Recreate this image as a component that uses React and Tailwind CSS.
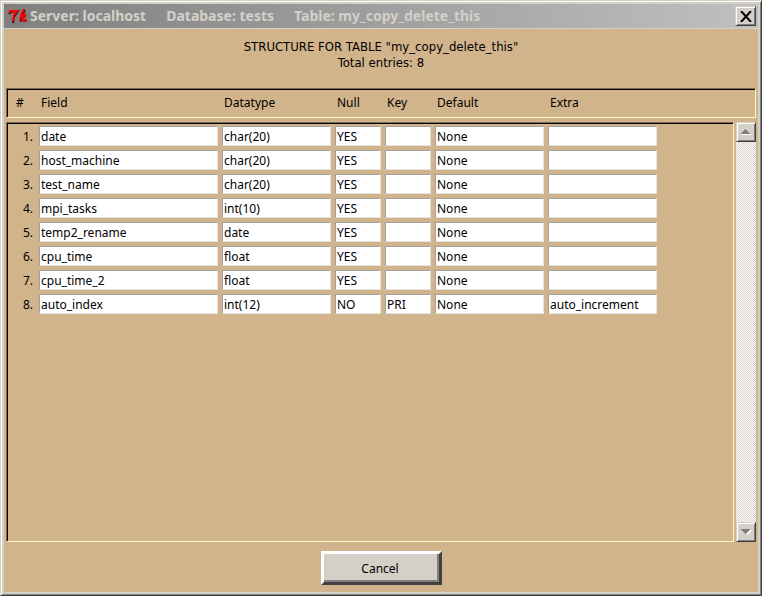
const COLUMNS = ["Field", "Datatype", "Null", "Key", "Default", "Extra"];

const ROWS = [
  ["date", "char(20)", "YES", "", "None", ""],
  ["host_machine", "char(20)", "YES", "", "None", ""],
  ["test_name", "char(20)", "YES", "", "None", ""],
  ["mpi_tasks", "int(10)", "YES", "", "None", ""],
  ["temp2_rename", "date", "YES", "", "None", ""],
  ["cpu_time", "float", "YES", "", "None", ""],
  ["cpu_time_2", "float", "YES", "", "None", ""],
  ["auto_index", "int(12)", "NO", "PRI", "None", "auto_increment"],
];

const SUNKEN =
  "border border-t-[#7e6b54] border-l-[#7e6b54] border-r-[#fff7c0] border-b-[#fff7c0] shadow-[inset_1px_1px_0_#000]";
const RAISED =
  "bg-[#d4d0c8] border border-t-[#d4d0c8] border-l-[#d4d0c8] border-r-[#404040] border-b-[#404040] shadow-[inset_1px_1px_0_#fff,inset_-1px_-1px_0_#808080]";

function TkLogo() {
  return (
    <svg width="20" height="16" viewBox="0 0 20 16" aria-hidden="true" className="shrink-0">
      <g fill="none" stroke="#4a1010">
        <path d="M1 6 3 4l7-1-4 6-1 6" strokeWidth="2" />
        <path d="m17 2-4 7v5M18 7l-3 3 1 3h3" strokeWidth="2" />
      </g>
      <g fill="none" stroke="#ff0000">
        <path d="M1 5 2 3h7L6 7 5 13" strokeWidth="2" />
        <path d="m16 1-3 6-1 6" strokeWidth="2" />
        <path d="m13 9 4-3v2l-2 2 1 3h2v-2" strokeWidth="1.6" />
      </g>
    </svg>
  );
}

function Columns() {
  return (
    <colgroup>
      <col className="w-[31px]" />
      <col className="w-[183px]" />
      <col className="w-[113px]" />
      <col className="w-[50px]" />
      <col className="w-[50px]" />
      <col className="w-[113px]" />
      <col className="w-[113px]" />
    </colgroup>
  );
}

function ScrollButton({ label, down }) {
  return (
    <button type="button" aria-label={label} className={`flex size-5 items-center justify-center ${RAISED}`}>
      <svg width="10" height="6" viewBox="0 0 10 6" shapeRendering="crispEdges" aria-hidden="true">
        {down ? (
          <>
            <path d="M10 1 6 5v1L10 2z" fill="#fff" stroke="#fff" />
            <path d="M0 0h9L5 5H4z" fill="#808080" />
          </>
        ) : (
          <>
            <path d="M1 5h9v1H1z" fill="#fff" />
            <path d="M0 5h9L5 0H4z" fill="#808080" />
          </>
        )}
      </svg>
    </button>
  );
}

export default function App() {
  return (
    <div className="flex min-h-screen flex-col border border-t-[#d4d0c8] border-l-[#d4d0c8] border-r-[#404040] border-b-[#404040] bg-[#d4d0c8] p-[3px] font-['Noto_Sans',sans-serif] text-xs text-black shadow-[inset_1px_1px_0_#fff,inset_-1px_-1px_0_#808080]">
      <header className="flex h-6 items-center gap-0.5 bg-linear-to-r from-[#808080] to-[#c0c0c0] pr-0.5 pl-1">
        <TkLogo />
        <h1 className="flex flex-1 gap-5 text-sm font-bold whitespace-nowrap text-[#d4d0c8]">
          <span>Server: localhost</span>
          <span>Database: tests</span>
          <span>Table: my_copy_delete_this</span>
        </h1>
        <button type="button" aria-label="Close" className={`flex h-5 w-[21px] items-center justify-center ${RAISED}`}>
          <svg width="12" height="11" viewBox="0 0 12 11" aria-hidden="true">
            <path d="m1 0 10 11M11 0 1 11" stroke="#000" strokeWidth="2" />
          </svg>
        </button>
      </header>

      <main className="mt-px flex flex-1 flex-col bg-[#d2b48c] px-0.5 pb-[7px]">
        <div className="pt-2.5 pb-[17px] text-center font-['DejaVu_Sans_Condensed','DejaVu_Sans',sans-serif] text-[13px] leading-4">
          <p>STRUCTURE FOR TABLE "my_copy_delete_this"</p>
          <p>Total entries: 8</p>
        </div>

        <div className={`mb-1 h-[30px] p-px ${SUNKEN}`}>
          <table className="table-fixed border-collapse text-left">
            <Columns />
            <thead>
              <tr className="h-[26px]">
                <th scope="col" className="pl-2 font-normal">#</th>
                {COLUMNS.map((name) => (
                  <th key={name} scope="col" className="pl-0.5 font-normal">{name}</th>
                ))}
              </tr>
            </thead>
          </table>
        </div>

        <div className="flex flex-1 gap-0.5">
          <div className={`flex-1 px-px pt-px ${SUNKEN}`}>
            <table className="table-fixed border-collapse">
              <Columns />
              <tbody>
                {ROWS.map((row, i) => (
                  <tr key={row[0]} className="h-6">
                    <th scope="row" className="pt-0.5 pr-1.5 text-right font-normal">{i + 1}.</th>
                    {row.map((value, c) => (
                      <td key={COLUMNS[c]} className="py-0.5 pr-1">
                        <input
                          type="text"
                          defaultValue={value}
                          aria-label={`${COLUMNS[c]} ${i + 1}`}
                          className="block h-5 w-full border border-t-[#a0a0a0] border-l-[#a0a0a0] border-r-[#e3e3e3] border-b-[#e3e3e3] bg-white px-px"
                        />
                      </td>
                    ))}
                  </tr>
                ))}
              </tbody>
            </table>
          </div>
          <div className="flex w-5 flex-col justify-between bg-[repeating-conic-gradient(#fff_0_25%,#d4d0c8_0_50%)] bg-size-[2px_2px]">
            <ScrollButton label="Scroll up" />
            <ScrollButton label="Scroll down" down />
          </div>
        </div>

        <button
          type="button"
          className="mt-[9px] h-[34px] w-[121px] self-center border-3 border-t-white border-l-white border-r-[#404040] border-b-[#404040] bg-[#d4d0c8] pt-0.5 pr-0.5 shadow-[inset_-2px_-2px_0_#808080]"
        >
          Cancel
        </button>
      </main>
    </div>
  );
}
